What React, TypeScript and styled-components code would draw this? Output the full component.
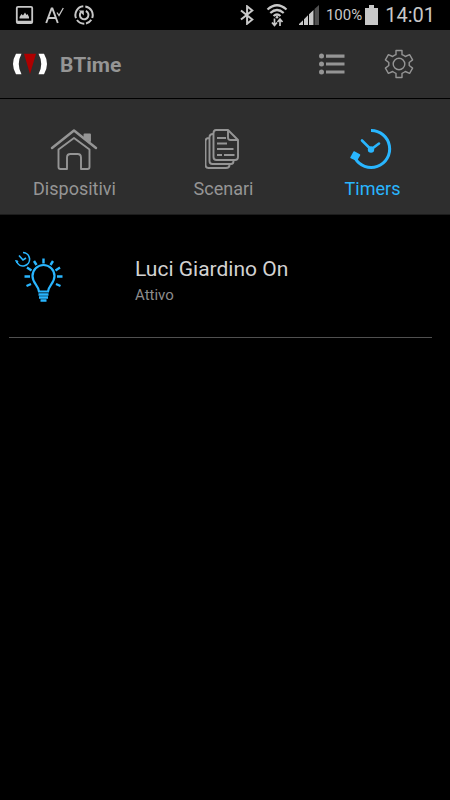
import React from "react";
import styled, { createGlobalStyle } from "styled-components";

const BLUE = "#29b6ff";
const GREY = "#959595";
const PANEL = "#2e2e2e";

const GlobalStyle = createGlobalStyle`
  * { box-sizing: border-box; }
  body { margin: 0; background: #000; font-family: Roboto, "Liberation Sans", sans-serif; }
`;

const Screen = styled.div`
  min-height: 100vh;
  background: #000;
`;

const StatusBar = styled.div`
  display: flex;
  justify-content: space-between;
  align-items: center;
  height: 30px;
  padding: 0 15px 0 14px;
  color: #c8c8c8;
  svg { display: block; }
`;

const StatusGroup = styled.div<{ $gap: number }>`
  display: flex;
  align-items: center;
  gap: ${(p) => p.$gap}px;
`;

const Battery = styled.span`
  display: flex;
  align-items: center;
  gap: 3px;
  font-size: 15px;
  line-height: 32px;
`;

const Clock = styled.time`
  font-size: 20px;
  line-height: 32px;
`;

const Header = styled.header`
  display: flex;
  align-items: center;
  height: 69px;
  padding: 0 36px 0 12px;
  background: ${PANEL};
  border-bottom: 1px solid #000;
`;

const Brand = styled.h1`
  flex: 1;
  margin: 0 0 0 12px;
  padding-top: 2px;
  font-size: 21px;
  line-height: 28px;
  font-weight: 700;
  color: ${GREY};
`;

const HeaderActions = styled.div`
  display: flex;
  align-items: center;
  gap: 38px;
`;

const IconButton = styled.button`
  display: block;
  padding: 0;
  border: 0;
  background: none;
  color: ${GREY};
  cursor: pointer;
  svg { display: block; }
`;

const Tabs = styled.nav`
  display: grid;
  grid-template-columns: repeat(3, 1fr);
  height: 116px;
  padding: 27px 3px 0 0;
  background: ${PANEL};
  border-bottom: 1px solid #1c1c1c;
`;

const Tab = styled.button<{ $active?: boolean }>`
  display: flex;
  flex-direction: column;
  align-items: center;
  gap: 5px;
  padding: 0;
  border: 0;
  background: none;
  font: inherit;
  font-size: 18px;
  line-height: 24px;
  color: ${(p) => (p.$active ? BLUE : GREY)};
  cursor: pointer;
  svg { display: block; }
`;

const TimerList = styled.ul`
  list-style: none;
  margin: 0;
  padding: 0 18px 0 9px;
`;

const TimerRow = styled.li`
  display: grid;
  grid-template-columns: 126px 1fr;
  height: 123px;
  border-bottom: 1px solid #505050;
`;

const RowIcon = styled.div`
  padding: 34px 0 0 3px;
  color: ${BLUE};
  svg { display: block; }
`;

const RowTitle = styled.h2`
  margin: 40px 0 0;
  font-size: 21px;
  line-height: 28px;
  font-weight: 400;
  color: #d2d2d2;
`;

const RowState = styled.p`
  margin: 2px 0 0;
  font-size: 15px;
  line-height: 20px;
  color: #8c8c8c;
`;

const PictureIcon = () => (
  <svg width="20" height="20" viewBox="0 0 20 20">
    <rect x="2.8" y="1.8" width="15.4" height="16.4" rx="1.2" fill="none" stroke="currentColor" strokeWidth="1.8" />
    <path d="M5.5 13.5v-1.5l2-3 1.5 1.5 2-3 1.5 2.5 1-1 1.5 3v1.5zM3 15.7h15v2.5H3z" fill="currentColor" />
  </svg>
);

const SpellIcon = () => (
  <svg width="20" height="20" viewBox="0 0 20 20" fill="none" stroke="currentColor">
    <path d="M2.2 18 7.6 3.5h.8L13.8 18M4.2 13h7.6" strokeWidth="1.9" />
    <path d="m13 7.5 2 3L19.3 3" strokeWidth="1.3" />
  </svg>
);

const SyncIcon = () => (
  <svg width="20" height="20" viewBox="0 0 20 20" fill="none" stroke="currentColor">
    <path d="M11.3 1.400A8.700 8.700 0 0 1 18.200 13M17.300 14.700A8.700 8.700 0 0 1 12 18.500M10.300 18.700A8.700 8.700 0 0 1 3 15M2 13.200A8.700 8.700 0 0 1 9.300 1.300" strokeWidth="2" />
    <path d="M11.800 6A4.300 4.300 0 1 1 6.900 7.200" strokeWidth="2" />
    <path d="M4.800 5.500h5v5z" fill="currentColor" stroke="none" />
  </svg>
);

const BluetoothIcon = () => (
  <svg width="16" height="20" viewBox="0 0 16 20" fill="none" stroke="currentColor" strokeWidth="2">
    <path d="m2 5.5 11.300 9-5.200 4.200V1.300l5.200 4.200L2 14.500" />
  </svg>
);

const WifiIcon = () => (
  <svg width="22" height="24" viewBox="0 0 22 24" fill="none" stroke="currentColor">
    <path d="M1.500 6.500Q11-2 20.500 6.500M4.300 10q6.700-6 13.400 0M7.500 13q3.500-3 7 0" strokeWidth="2.200" />
    <circle cx="11" cy="14.300" r="1.300" fill="currentColor" stroke="none" />
    <path d="M8.500 15.500v7M6 19.500l2.500 3 2.500-3M14 23v-7M11.500 19l2.500-3 2.500 3" strokeWidth="1.700" />
  </svg>
);

const SignalIcon = () => (
  <svg width="20" height="20" viewBox="0 0 20 20" fill="currentColor">
    <path d="M0 20v-1l4-3.800V20zM5 20v-5.800l4-4V20zM10 20V9.200l4.500-4.300V20z" />
    <path d="M15.500 20V4L20 0v20z" opacity=".4" />
  </svg>
);

const BatteryIcon = () => (
  <svg width="13" height="20" viewBox="0 0 13 20" fill="currentColor">
    <path d="M4 0h5v3h4v17H0V3h4z" />
  </svg>
);

const Logo = () => (
  <svg width="36" height="22" viewBox="0 0 36 22" role="img" aria-label="BTime logo">
    <path d="M4 .8h5.500Q4 11 9.500 21.200H4Q-2 11 4 .8zM32 .8h-5.500q5.500 10.200 0 20.400H32q6-10.200 0-20.400z" fill="#fff" />
    <path d="M12 .8h12L18 21z" fill="#ad0000" />
  </svg>
);

const ListIcon = () => (
  <svg width="28" height="24" viewBox="0 0 28 24" fill="currentColor">
    <circle cx="3.500" cy="4" r="2.500" />
    <circle cx="3.500" cy="12" r="2.500" />
    <circle cx="3.500" cy="20" r="2.500" />
    <path d="M8 2.500h18.500v3.200H8zM8 10.400h18.500v3.200H8zM8 18.400h18.500v3.200H8z" />
  </svg>
);

const GearIcon = () => (
  <svg width="30" height="30" viewBox="0 0 30 30" fill="none" stroke="currentColor" strokeWidth="1.400" strokeLinejoin="round">
    <circle cx="15" cy="15" r="5.800" />
    <path d="M12 1.500h6v4.200q1.800.6 3.300 1.800l4.300-1.800 3 5.200-3.400 2.600v3l3.400 2.600-3 5.200-4.300-1.800q-1.500 1.200-3.300 1.800v4.200h-6v-4.200q-1.800-.6-3.300-1.800l-4.300 1.800-3-5.200 3.400-2.600v-3l-3.400-2.600 3-5.200 4.300 1.800q1.500-1.200 3.300-1.800z" />
  </svg>
);

const HomeIcon = () => (
  <svg width="50" height="46" viewBox="1 0 50 46" fill="none" stroke="currentColor" strokeWidth="1.900" strokeLinecap="round" strokeLinejoin="round">
    <path d="M3 22 25 4.500 47 22" strokeWidth="2.500" />
    <path d="M9.500 23.500 25 12l15.500 11.500V41q0 2-2 2H32V31.500q0-3.500-3.500-3.500h-7q-3.500 0-3.500 3.500V43h-6.500q-2 0-2-2z" />
    <path d="M35.500 11V8.500H41V15z" fill="currentColor" />
  </svg>
);

const PagesIcon = () => (
  <svg width="38" height="46" viewBox="2 0 38 46" fill="none" stroke="currentColor" strokeWidth="1.900" strokeLinejoin="round">
    <path d="M10.500 7.500Q10.500 4 13 4h12l10 10v17q0 3-3 3H13.500q-3 0-3-3z" />
    <path d="M25 4v7.500q0 2.500 2.500 2.500H35" />
    <path d="M10 8q-3.500 0-3.500 3v24q0 3 3 3H28q2.500 0 2.500-3M6 12q-3.500 0-3.500 3v24q0 3 3 3H23q3.500 0 3.500-3" />
    <path d="M14 12h9M14 17.500h10M14 23h16.500M14 29h5M21 29h10.500" />
  </svg>
);

const TimerIcon = () => (
  <svg width="46" height="46" viewBox="3 0 46 46" fill="none" stroke="currentColor">
    <path d="M24 4.500A18.500 18.500 0 1 1 8 32" strokeWidth="3" />
    <path d="m7 26 5.500 3-3 5-5.500-2.500z" fill="currentColor" strokeWidth="1.500" strokeLinejoin="round" />
    <path d="m15 14.500 9 9 8-6" strokeWidth="2.600" strokeLinecap="round" />
    <circle cx="24" cy="23.500" r="3.200" fill="currentColor" stroke="none" />
  </svg>
);

const BulbIcon = () => (
  <svg width="54" height="54" viewBox="0 0 54 54" fill="none" stroke="currentColor">
    <path d="M27 42.500c-1-6.500-6.500-8.500-6.500-15.500a11 11 0 1 1 22 0c0 7-5.500 9-6.500 15.500z" strokeWidth="2.200" />
    <path d="M26.500 45.500h10M27 48.500h9M28.500 51.500h6" strokeWidth="2.500" />
    <path d="M31.500 9.500v5M22 12l2.500 4M41 12l-2.500 4M15 18.500l4.500 3M48 18.500l-4.500 3M12.500 27.500H18M45 27.500h5.500M14.500 37l4.500-2M48.500 37 44 35" strokeWidth="2.400" />
    <path d="M11 3.500a6.700 6.700 0 1 1-6.300 9.300M7 6.500l4 4.500 3-2" strokeWidth="1.600" />
    <path d="m3.500 11.500 2.500.7-1 1.800z" fill="currentColor" strokeWidth="1" />
  </svg>
);

export default function App() {
  return (
    <Screen>
      <GlobalStyle />
      <StatusBar>
        <StatusGroup $gap={10}>
          <PictureIcon />
          <SpellIcon />
          <SyncIcon />
        </StatusGroup>
        <StatusGroup $gap={7}>
          <StatusGroup $gap={11}>
            <BluetoothIcon />
            <WifiIcon />
            <SignalIcon />
          </StatusGroup>
          <Battery>
            100%
            <BatteryIcon />
          </Battery>
          <Clock>14:01</Clock>
        </StatusGroup>
      </StatusBar>
      <Header>
        <Logo />
        <Brand>BTime</Brand>
        <HeaderActions>
          <IconButton type="button" aria-label="Menu"><ListIcon /></IconButton>
          <IconButton type="button" aria-label="Impostazioni"><GearIcon /></IconButton>
        </HeaderActions>
      </Header>
      <Tabs>
        <Tab type="button"><HomeIcon />Dispositivi</Tab>
        <Tab type="button"><PagesIcon />Scenari</Tab>
        <Tab type="button" $active aria-current="page"><TimerIcon />Timers</Tab>
      </Tabs>
      <main>
        <TimerList>
          <TimerRow>
            <RowIcon><BulbIcon /></RowIcon>
            <div>
              <RowTitle>Luci Giardino On</RowTitle>
              <RowState>Attivo</RowState>
            </div>
          </TimerRow>
        </TimerList>
      </main>
    </Screen>
  );
}
